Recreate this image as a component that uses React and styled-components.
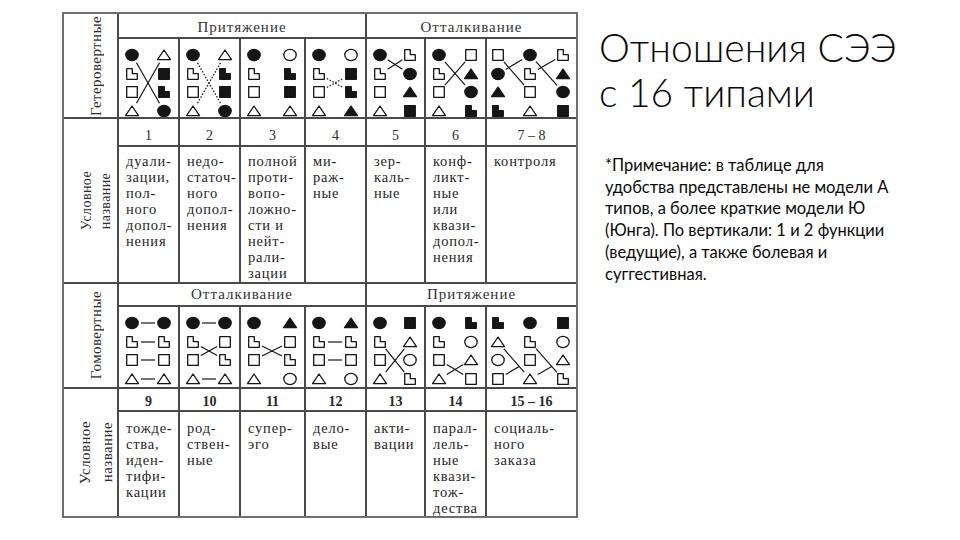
import React from 'react';
import styled, { createGlobalStyle } from 'styled-components';

const INK = '#161616';
const COLS = [53, 59, 59, 63, 59, 57, 59, 89];
const ROWS = [23, 78, 26, 135, 21, 80, 21, 104];

const GlobalStyle = createGlobalStyle`
  html, body {
    margin: 0;
    padding: 0;
    background: #fff;
  }
  body {
    width: 960px;
    height: 540px;
    overflow: hidden;
  }
`;

// one function per symbol: upper case = black (extravert), lower case = white
const Shape = ({ kind, x, y }) => {
  const fill = kind === kind.toUpperCase() ? INK : '#fff';
  const props = { fill, stroke: INK, strokeWidth: 1.3, strokeLinejoin: 'round' };
  switch (kind.toLowerCase()) {
    case 'c':
      return <ellipse cx={x} cy={y} rx={6.2} ry={5.6} {...props} />;
    case 's':
      return <rect x={x - 5.3} y={y - 5.3} width={10.6} height={10.6} {...props} />;
    case 't':
      return <polygon points={`${x},${y - 5} ${x + 6.5},${y + 4.6} ${x - 6.5},${y + 4.6}`} {...props} />;
    default:
      return <path d={`M${x - 5.3} ${y - 5.3}h5.6v5h5v5.6h-10.6z`} {...props} />;
  }
};

const Diagram = ({ cols, lines = [], dotted, w, h }) => {
  const xs = cols.length === 3 ? [11, 43, 76] : [13, w - 14];
  const ys = [16, 35, 53, 72];
  const trim = 9;

  return (
    <svg width={w} height={h} viewBox={`0 0 ${w} ${h}`}>
      {lines.map(([c1, r1, c2, r2, end], i) => {
        const x1 = xs[c1];
        const y1 = ys[r1];
        const x2 = xs[c2];
        const y2 = ys[r2];
        const len = Math.hypot(x2 - x1, y2 - y1);
        const ux = (x2 - x1) / len;
        const uy = (y2 - y1) / len;
        const ex = end ? x1 + (x2 - x1) * end : x2 - ux * trim;
        const ey = end ? y1 + (y2 - y1) * end : y2 - uy * trim;
        return (
          <line
            key={i}
            x1={x1 + ux * trim}
            y1={y1 + uy * trim}
            x2={ex}
            y2={ey}
            stroke={INK}
            strokeWidth={1.2}
            strokeDasharray={dotted ? '1.6 1.6' : undefined}
          />
        );
      })}
      {cols.map((col, ci) =>
        col.split('').map((k, ri) => <Shape key={`${ci}-${ri}`} kind={k} x={xs[ci]} y={ys[ri]} />)
      )}
    </svg>
  );
};

const SECTIONS = [
  {
    label: 'Гетеровертные',
    nameLabelSize: 14,
    nameLabelLine: 19,
    headers: [['Притяжение', 4], ['Отталкивание', 3]],
    boldNumbers: false,
    columns: [
      { n: '1', cols: ['Clst', 'tSLC'], lines: [[0, 0, 1, 3], [0, 3, 1, 0]], name: 'дуали-\nзации,\nпол-\nного\nдопол-\nнения' },
      { n: '2', cols: ['Clst', 'tLSC'], lines: [[0, 0, 1, 3], [0, 3, 1, 0]], dotted: true, name: 'недо-\nстаточ-\nного\nдопол-\nнения' },
      { n: '3', cols: ['Clst', 'cLSt'], name: 'полной\nпроти-\nвопо-\nложно-\nсти и\nнейт-\nрали-\nзации' },
      { n: '4', cols: ['Clst', 'cSLT'], lines: [[0, 1, 1, 2], [0, 2, 1, 1]], dotted: true, name: 'ми-\nраж-\nные' },
      { n: '5', cols: ['Clst', 'lCTS'], lines: [[0, 0, 1, 1], [0, 1, 1, 0]], name: 'зер-\nкаль-\nные' },
      { n: '6', cols: ['Clst', 'sTCL'], lines: [[0, 0, 1, 2], [0, 2, 1, 0]], name: 'конф-\nликт-\nные\nили\nквази-\nдопол-\nнения' },
      {
        n: '7 – 8',
        cols: ['sCTL', 'Clst', 'lTCS'],
        lines: [[0, 0, 1, 2], [0, 1, 1, 0], [1, 0, 2, 2], [1, 1, 2, 0]],
        name: 'контроля',
      },
    ],
  },
  {
    label: 'Гомовертные',
    nameLabelSize: 15,
    nameLabelLine: 22,
    headers: [['Отталкивание', 4], ['Притяжение', 3]],
    boldNumbers: true,
    columns: [
      { n: '9', cols: ['Clst', 'Clst'], lines: [[0, 0, 1, 0], [0, 1, 1, 1], [0, 2, 1, 2], [0, 3, 1, 3]], name: 'тожде-\nства,\nиден-\nтифи-\nкации' },
      { n: '10', cols: ['Clst', 'Cslt'], lines: [[0, 0, 1, 0], [0, 1, 1, 2], [0, 2, 1, 1], [0, 3, 1, 3]], name: 'род-\nствен-\nные' },
      { n: '11', cols: ['Clst', 'Tslc'], lines: [[0, 1, 1, 2], [0, 2, 1, 1]], name: 'супер-\nэго' },
      { n: '12', cols: ['Clst', 'Tlsc'], lines: [[0, 1, 1, 1], [0, 2, 1, 2]], name: 'дело-\nвые' },
      { n: '13', cols: ['Clst', 'Stcl'], lines: [[0, 1, 1, 3], [0, 3, 1, 1]], name: 'акти-\nвации' },
      { n: '14', cols: ['Clst', 'Lcts'], lines: [[0, 2, 1, 3], [0, 3, 1, 2]], name: 'парал-\nлель-\nные\nквази-\nтож-\nдества' },
      {
        n: '15 – 16',
        cols: ['Ltcs', 'Clst', 'Sctl'],
        lines: [[0, 1, 1, 3], [0, 3, 1, 2, 0.66], [1, 1, 2, 3], [1, 3, 2, 2, 0.66]],
        name: 'социаль-\nного\nзаказа',
      },
    ],
  },
];

const NOTE = [
  '*Примечание: в таблице для',
  'удобства представлены не модели А',
  'типов, а более краткие модели Ю',
  '(Юнга). По вертикали: 1 и 2 функции',
  '(ведущие), а также болевая и',
  'суггестивная.',
];

const App = () => (
  <>
    <GlobalStyle />
    <Slide>
      <Table>
        {SECTIONS.map((section, si) => {
          const diagramRow = si === 0 ? ROWS[1] : ROWS[5];
          return (
            <React.Fragment key={si}>
              <LabelCell>
                <VerticalText $size={15} $line={18}>{section.label}</VerticalText>
              </LabelCell>
              {section.headers.map(([title, span]) => (
                <HeaderCell key={title} $span={span} $top={si === 0}>
                  {title}
                </HeaderCell>
              ))}
              {section.columns.map((col, ci) => (
                <DiagramCell key={col.n}>
                  <Diagram cols={col.cols} lines={col.lines} dotted={col.dotted} w={COLS[ci + 1]} h={diagramRow} />
                </DiagramCell>
              ))}
              <LabelCell>
                <VerticalText $size={section.nameLabelSize} $line={section.nameLabelLine}>
                  Условное
                  <br />
                  название
                </VerticalText>
              </LabelCell>
              {section.columns.map(col => (
                <NumberCell key={col.n} $bold={section.boldNumbers} $top={si === 0}>
                  {col.n}
                </NumberCell>
              ))}
              {section.columns.map(col => (
                <NameCell key={col.n} $top={si === 0}>
                  {col.name}
                </NameCell>
              ))}
            </React.Fragment>
          );
        })}
      </Table>

      <Side>
        <Title>
          Отношения СЭЭ
          <br />с 16 типами
        </Title>
        <Note>
          {NOTE.map(line => (
            <NoteLine key={line}>{line}</NoteLine>
          ))}
        </Note>
      </Side>
    </Slide>
  </>
);

export default App;

const Slide = styled.div`
  display: flex;
  align-items: flex-start;
  width: 960px;
  height: 540px;
  background: #fff;
`;

const Table = styled.div`
  flex: none;
  display: grid;
  grid-template-columns: ${COLS.map(c => `${c}px`).join(' ')};
  grid-template-rows: ${ROWS.map(r => `${r}px`).join(' ')};
  gap: 2px;
  margin: 12px 0 0 62px;
  border: 2px solid #6e6e6e;
  background: #4a4a4a;
  font-family: 'Liberation Serif', 'Times New Roman', serif;
  color: #262626;
`;

const Cell = styled.div`
  background: #fff;
  overflow: hidden;
`;

const LabelCell = styled(Cell)`
  grid-row: span 2;
  display: flex;
  align-items: center;
  justify-content: center;
  padding-left: 10px;
`;

const VerticalText = styled.div`
  writing-mode: vertical-rl;
  transform: rotate(180deg);
  font-size: ${p => p.$size}px;
  line-height: ${p => p.$line}px;
  letter-spacing: 0.4px;
  text-align: center;
  white-space: nowrap;
  color: #2e2e2e;
`;

const HeaderCell = styled(Cell)`
  grid-column: span ${p => p.$span};
  display: flex;
  align-items: flex-end;
  justify-content: center;
  padding-bottom: ${p => (p.$top ? 0 : 1)}px;
  font-size: 15px;
  letter-spacing: 1px;
  line-height: 20px;
  color: #333;
`;

const DiagramCell = styled(Cell)`
  display: flex;

  svg {
    display: block;
  }
`;

const NumberCell = styled(Cell)`
  display: flex;
  align-items: center;
  justify-content: center;
  padding-top: ${p => (p.$top ? 7 : 4)}px;
  font-size: 14px;
  font-weight: ${p => (p.$bold ? 700 : 400)};
  color: #2a2a2a;
`;

const NameCell = styled(Cell)`
  padding: ${p => (p.$top ? 6 : 8)}px 4px 0 7px;
  font-size: 14.5px;
  line-height: 16px;
  letter-spacing: 0.8px;
  white-space: pre;
  color: #1f1f1f;
`;

const Side = styled.div`
  display: flex;
  flex-direction: column;
  margin-left: 21px;
  padding-top: 25px;
  font-family: Lato, 'Open Sans', sans-serif;
  color: #0a0a0a;
`;

const Title = styled.h1`
  margin: 0;
  font-size: 39px;
  font-weight: 300;
  line-height: 45px;
  white-space: nowrap;
`;

const Note = styled.div`
  margin-top: 40px;
  padding-left: 6px;
  font-size: 16.5px;
  line-height: 21.7px;
`;

const NoteLine = styled.div`
  white-space: nowrap;
`;
